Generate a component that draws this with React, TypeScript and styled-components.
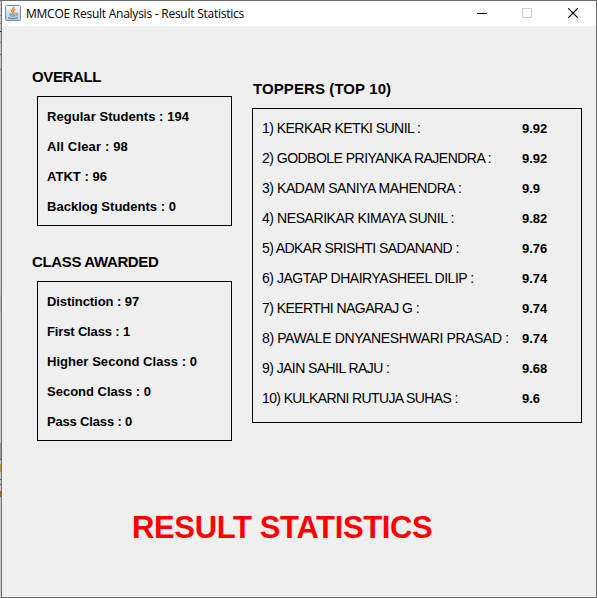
import React from 'react';
import styled, { createGlobalStyle } from 'styled-components';

const GlobalStyle = createGlobalStyle`
  body {
    margin: 0;
    background: #c9cacb;
  }
  * {
    box-sizing: border-box;
  }
`;

/* The strip of desktop left of the window is the page behind it. */
const Desktop = styled.div`
  display: flex;
  width: 597px;
  height: 598px;
  overflow: hidden;
  font-family: 'Liberation Sans', Arial, sans-serif;
  color: #000;
`;

const BackdropStrip = styled.div`
  width: 1px;
  flex: none;
  background: linear-gradient(
    #777 0 1px, #c9cacb 1px 15px, #8b8b8b 15px 16px, #c9cacb 16px 23px, #8b8b8b 23px 24px,
    #c9cacb 24px 31px, #202060 31px 32px, #c9cacb 32px 42px, #8b8b8b 42px 43px, #c9cacb 43px 54px,
    #3e8244 54px 55px, #c9cacb 55px 69px, #5e7fae 69px 70px, #c9cacb 70px 295px, #b5bac7 295px 313px,
    #c9cacb 313px 443px, #999 443px 459px, #5f5f5f 459px 460px, #c9cacb 460px 464px,
    #b59a45 464px 472px, #c9cacb 472px 479px, #666 479px 480px, #c9cacb 480px 484px, #666 484px 485px,
    #c9cacb 485px 491px, #b06a00 491px 497px, #c9cacb 497px
  );
`;

const Window = styled.main`
  display: flex;
  flex-direction: column;
  flex: 1;
  border: 1px solid #6b6b6b;
  background: #efefef;
`;

const TitleBar = styled.header`
  display: flex;
  align-items: center;
  flex: none;
  height: 25px;
  padding-left: 3px;
  background: #fff;
`;

const AppIcon = styled.svg`
  width: 16px;
  height: 16px;
  margin-bottom: 1px;
`;

const WindowTitle = styled.h1`
  flex: 1;
  margin: 0 0 0 5px;
  font: 400 12px/24px 'Open Sans', 'Noto Sans', sans-serif;
  letter-spacing: -0.246px;
  white-space: nowrap;
`;

const WindowButton = styled.button<{ $width: number }>`
  display: flex;
  align-items: center;
  justify-content: center;
  width: ${(p) => p.$width}px;
  height: 25px;
  padding: 0 0 1px;
  border: 0;
  background: transparent;
`;

const Content = styled.div`
  display: flex;
  align-items: flex-start;
  gap: 20px;
  height: 484px;
  padding: 42px 0 0 30px;
`;

const Column = styled.div<{ $top?: number }>`
  display: flex;
  flex-direction: column;
  padding-top: ${(p) => p.$top ?? 0}px;
`;

const Section = styled.section`
  & + & {
    margin-top: 27px;
  }
`;

const Heading = styled.h2<{ $spacing: number; $indent?: number }>`
  height: 18px;
  margin: 0 0 10px;
  padding-left: ${(p) => p.$indent ?? 0}px;
  font-size: 15px;
  line-height: 18px;
  letter-spacing: ${(p) => p.$spacing}px;
  white-space: nowrap;
`;

const Panel = styled.div<{ $width: number; $height: number; $indent?: number }>`
  width: ${(p) => p.$width}px;
  height: ${(p) => p.$height}px;
  margin-left: ${(p) => p.$indent ?? 0}px;
  padding: 5px 0 0 9px;
  border: 1px solid #000;
  font-size: 13px;
  line-height: 30px;
  white-space: nowrap;
`;

const Stat = styled.div<{ $spacing: number }>`
  height: 30px;
  font-weight: 700;
  letter-spacing: ${(p) => p.$spacing}px;
`;

const TopperRow = styled.div`
  display: grid;
  grid-template-columns: 260px auto;
  height: 30px;
`;

const Name = styled.span<{ $spacing: number }>`
  font-size: 14px;
  line-height: 29px;
  letter-spacing: ${(p) => p.$spacing}px;
`;

const Score = styled.span`
  font-weight: 700;
`;

const Banner = styled.div`
  padding-left: 130px;
  color: #f00;
  font-size: 31px;
  font-weight: 700;
  line-height: 36px;
  letter-spacing: -0.36px;
  white-space: nowrap;
`;

type Line = [text: string, spacing: number];

const overall: Line[] = [
  ['Regular Students : 194', 0.05],
  ['All Clear : 98', 0.16],
  ['ATKT : 96', 0.03],
  ['Backlog Students : 0', 0.02],
];

const classes: Line[] = [
  ['Distinction : 97', -0.07],
  ['First Class : 1', -0.15],
  ['Higher Second Class : 0', 0.05],
  ['Second Class : 0', 0],
  ['Pass Class : 0', -0.17],
];

const toppers: [name: string, score: string, spacing: number][] = [
  ['1) KERKAR KETKI SUNIL :', '9.92', -0.53],
  ['2) GODBOLE PRIYANKA RAJENDRA :', '9.92', -0.52],
  ['3) KADAM SANIYA MAHENDRA :', '9.9', -0.43],
  ['4) NESARIKAR KIMAYA SUNIL :', '9.82', -0.43],
  ['5) ADKAR SRISHTI SADANAND :', '9.76', -0.58],
  ['6) JAGTAP DHAIRYASHEEL DILIP :', '9.74', -0.48],
  ['7) KEERTHI NAGARAJ G :', '9.74', -0.56],
  ['8) PAWALE DNYANESHWARI PRASAD :', '9.74', -0.38],
  ['9) JAIN SAHIL RAJU :', '9.68', -0.57],
  ['10) KULKARNI RUTUJA SUHAS :', '9.6', -0.62],
];

const JavaIcon = () => (
  <AppIcon viewBox="0 0 16 16">
    <defs>
      <linearGradient id="javaBg" x2="0" y2="1">
        <stop stopColor="#f8fafb" />
        <stop offset="1" stopColor="#b9c9d5" />
      </linearGradient>
    </defs>
    <rect x=".5" y=".5" width="15" height="15" rx="1" fill="url(#javaBg)" stroke="#7890a3" />
    <path d="M8.7 1.8c.8 2-2.7 2.6-2.1 4.2.2.7.9 1.1 1.1 1.8M10.4 4c-1.7.7-2.6 1.5-1.6 2.6.4.5.1 1-.3 1.4" fill="none" stroke="#e8741a" strokeWidth="1.2" />
    <path d="M4.3 8.8c1.7.6 4.7.5 6.4 0M5 10.7c1.5.5 3.7.4 5.2 0M11.2 8.5c2.3-.2 1.8 2.1-.5 2.4M3 12.7c2.5 1.2 7.3 1.1 10-.1" fill="none" stroke="#4d7fa7" strokeWidth="1" />
  </AppIcon>
);

export default function App() {
  return (
    <>
      <GlobalStyle />
      <Desktop>
        <BackdropStrip />
        <Window>
          <TitleBar>
            <JavaIcon />
            <WindowTitle>MMCOE Result Analysis - Result Statistics</WindowTitle>
            <WindowButton $width={46} aria-label="Minimize">
              <svg width="10" height="10" shapeRendering="crispEdges">
                <path d="M0 5.5h10" stroke="#000" />
              </svg>
            </WindowButton>
            <WindowButton $width={44} aria-label="Maximize" disabled>
              <svg width="10" height="10" shapeRendering="crispEdges">
                <path d="M.5.5h9v9h-9z" fill="none" stroke="#ccc" />
              </svg>
            </WindowButton>
            <WindowButton $width={47} aria-label="Close">
              <svg width="10" height="10">
                <path d="M.3.3l9.4 9.4M9.7.3L.3 9.7" stroke="#000" strokeWidth="1.15" />
              </svg>
            </WindowButton>
          </TitleBar>
          <Content>
            <Column>
              <Section>
                <Heading $spacing={-0.38}>OVERALL</Heading>
                <Panel $width={195} $height={130} $indent={5}>
                  {overall.map(([text, spacing]) => (
                    <Stat key={text} $spacing={spacing}>{text}</Stat>
                  ))}
                </Panel>
              </Section>
              <Section>
                <Heading $spacing={-0.36}>CLASS AWARDED</Heading>
                <Panel $width={195} $height={160} $indent={5}>
                  {classes.map(([text, spacing]) => (
                    <Stat key={text} $spacing={spacing}>{text}</Stat>
                  ))}
                </Panel>
              </Section>
            </Column>
            <Column $top={12}>
              <Heading $spacing={0.09} $indent={1}>TOPPERS (TOP 10)</Heading>
              <Panel $width={330} $height={315}>
                {toppers.map(([name, score, spacing]) => (
                  <TopperRow key={name}>
                    <Name $spacing={spacing}>{name}</Name>
                    <Score>{score}</Score>
                  </TopperRow>
                ))}
              </Panel>
            </Column>
          </Content>
          <Banner>RESULT STATISTICS</Banner>
        </Window>
      </Desktop>
    </>
  );
}
